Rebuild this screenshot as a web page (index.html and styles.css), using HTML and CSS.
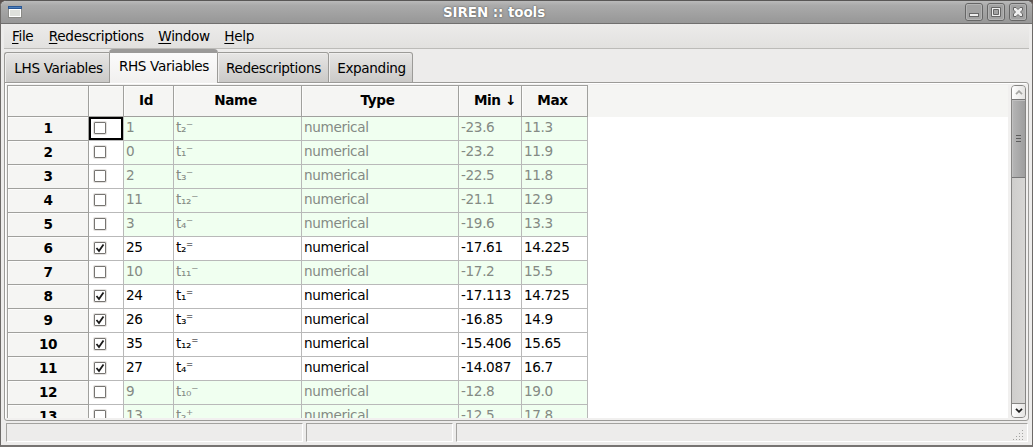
FILE: index.html
```html
<!DOCTYPE html>
<html lang="en">
<head>
<meta charset="utf-8">
<title>SIREN :: tools</title>
<link rel="stylesheet" href="styles.css">
</head>
<body>
<div class="window">
  <header class="titlebar">
    <svg class="app-icon" width="14" height="12" viewBox="0 0 14 12" shape-rendering="crispEdges"><rect width="14" height="12" fill="#8a8a86"/><rect x="1" y="3" width="12" height="8" fill="#fff"/><rect x="2" y="4" width="10" height="6" fill="#dfe1dc"/><rect width="14" height="3" fill="#2a5795"/><rect x="1" y="1" width="12" height="1" fill="#4c7fbd"/></svg>
    <h1 class="title">SIREN :: tools</h1>
    <div class="controls">
      <svg class="control" viewBox="0 0 18 18"><rect x=".5" y=".5" width="17" height="17" rx="2.5" class="frame"/><rect x="1.5" y="1.5" width="15" height="15" rx="1.5" class="shine"/><rect x="4.5" y="10.5" width="9" height="3" class="glyph"/></svg>
      <svg class="control" viewBox="0 0 18 18"><rect x=".5" y=".5" width="17" height="17" rx="2.5" class="frame"/><rect x="1.5" y="1.5" width="15" height="15" rx="1.5" class="shine"/><path d="M4.500 4.500h9v9h-9z M6.500 6.500v5h5v-5z" fill-rule="evenodd" class="glyph"/></svg>
      <svg class="control" viewBox="0 0 18 18"><rect x=".5" y=".5" width="17" height="17" rx="2.5" class="frame"/><rect x="1.5" y="1.5" width="15" height="15" rx="1.5" class="shine"/><path d="M4.500 4.500h2.500l2 2 2-2h2.500v2.500l-2 2 2 2v2.500h-2.500l-2-2-2 2h-2.500v-2.500l2-2-2-2z" class="glyph"/></svg>
    </div>
  </header>
  <nav class="menubar">
    <span class="menu"><u>F</u>ile</span><span class="menu"><u>R</u>edescriptions</span><span class="menu"><u>W</u>indow</span><span class="menu"><u>H</u>elp</span>
  </nav>
  <div class="tabs">
    <div class="tab tab-lhs">LHS Variables</div><div class="tab active">RHS Variables</div><div class="tab tab-red">Redescriptions</div><div class="tab tab-exp">Expanding</div>
  </div>
  <main class="pane">
    <div class="grid-view">
      <table class="grid">
        <colgroup><col class="c-row"><col class="c-check"><col class="c-id"><col class="c-name"><col class="c-type"><col class="c-min"><col class="c-max"></colgroup>
        <thead><tr><th></th><th></th><th><span class="h-id">Id</span></th><th><span class="h-name">Name</span></th><th><span class="h-type">Type</span></th><th><span class="h-min">Min ↓</span></th><th><span class="h-max">Max</span></th></tr></thead>
        <tbody>
          <tr class="off"><th>1</th><td class="check focus"><i class="box"></i></td><td>1</td><td>t₂⁻</td><td>numerical</td><td>-23.6</td><td>11.3</td></tr>
          <tr class="off"><th>2</th><td class="check"><i class="box"></i></td><td>0</td><td>t₁⁻</td><td>numerical</td><td>-23.2</td><td>11.9</td></tr>
          <tr class="off"><th>3</th><td class="check"><i class="box"></i></td><td>2</td><td>t₃⁻</td><td>numerical</td><td>-22.5</td><td>11.8</td></tr>
          <tr class="off"><th>4</th><td class="check"><i class="box"></i></td><td>11</td><td>t₁₂⁻</td><td>numerical</td><td>-21.1</td><td>12.9</td></tr>
          <tr class="off"><th>5</th><td class="check"><i class="box"></i></td><td>3</td><td>t₄⁻</td><td>numerical</td><td>-19.6</td><td>13.3</td></tr>
          <tr><th>6</th><td class="check"><i class="box"><svg viewBox="0 0 10 10"><path d="M1.500 5l2.500 3L8.500 1.500" /></svg></i></td><td>25</td><td>t₂⁼</td><td>numerical</td><td>-17.61</td><td>14.225</td></tr>
          <tr class="off"><th>7</th><td class="check"><i class="box"></i></td><td>10</td><td>t₁₁⁻</td><td>numerical</td><td>-17.2</td><td>15.5</td></tr>
          <tr><th>8</th><td class="check"><i class="box"><svg viewBox="0 0 10 10"><path d="M1.500 5l2.500 3L8.500 1.500" /></svg></i></td><td>24</td><td>t₁⁼</td><td>numerical</td><td>-17.113</td><td>14.725</td></tr>
          <tr><th>9</th><td class="check"><i class="box"><svg viewBox="0 0 10 10"><path d="M1.500 5l2.500 3L8.500 1.500" /></svg></i></td><td>26</td><td>t₃⁼</td><td>numerical</td><td>-16.85</td><td>14.9</td></tr>
          <tr><th>10</th><td class="check"><i class="box"><svg viewBox="0 0 10 10"><path d="M1.500 5l2.500 3L8.500 1.500" /></svg></i></td><td>35</td><td>t₁₂⁼</td><td>numerical</td><td>-15.406</td><td>15.65</td></tr>
          <tr><th>11</th><td class="check"><i class="box"><svg viewBox="0 0 10 10"><path d="M1.500 5l2.500 3L8.500 1.500" /></svg></i></td><td>27</td><td>t₄⁼</td><td>numerical</td><td>-14.087</td><td>16.7</td></tr>
          <tr class="off"><th>12</th><td class="check"><i class="box"></i></td><td>9</td><td>t₁₀⁻</td><td>numerical</td><td>-12.8</td><td>19.0</td></tr>
          <tr class="off"><th>13</th><td class="check"><i class="box"></i></td><td>13</td><td>t₂⁺</td><td>numerical</td><td>-12.5</td><td>17.8</td></tr>
        </tbody>
      </table>
    </div>
    <div class="scrollbar">
      <div class="step up"><svg width="8" height="5" viewBox="0 0 8 5"><path d="M1 4.200l3-3 3 3" stroke="#a5a5a2"/></svg></div>
      <div class="thumb"><i></i><i></i><i></i></div>
      <div class="step down"><svg width="8" height="5" viewBox="0 0 8 5"><path d="M1 .8l3 3 3-3" stroke="#1c1c1c"/></svg></div>
    </div>
  </main>
  <footer class="statusbar">
    <div class="field first"></div><div class="field second"></div>
    <div class="field last"><svg width="12" height="12" viewBox="0 0 12 12" shape-rendering="crispEdges"><path d="M10 1h1M10 4h1M7 4h1M10 7h1M7 7h1M4 7h1M10 10h1M7 10h1M4 10h1M1 10h1" transform="translate(0 .5)" stroke="#a2a2a0"/></svg></div>
  </footer>
</div>
</body>
</html>
```
FILE: styles.css
```css
* { box-sizing: border-box; }

body {
  margin: 0;
  background: #5d5350;
  font: 13.6px/16px "DejaVu Sans", sans-serif;
  letter-spacing: -0.35px;
  color: #000;
  overflow: hidden;
}

.window {
  width: 1033px;
  height: 447px;
  display: flex;
  flex-direction: column;
  background: #edeceb;
  border: 1px solid #6d6a68;
  border-top-color: #595756;
  border-bottom: 2px solid #777472;
  border-radius: 6px 6px 0 0;
  overflow: hidden;
}

.titlebar {
  height: 23px;
  flex: none;
  display: flex;
  align-items: center;
  padding: 0 5px 0 7px;
  background: linear-gradient(#bababa, #aaa 20%, #979797);
  border-bottom: 1px solid #706f6e;
}
.app-icon { flex: none; }
.title {
  flex: 1;
  margin: 0 0 0 1px;
  text-align: center;
  font-size: 13.5px;
  letter-spacing: -0.1px;
  line-height: 16px;
  color: #fff;
  text-shadow: 0 0 1px #555, 0 0 2px #666;
}
.controls { display: flex; gap: 4px; }
.control { width: 18px; height: 18px; display: block; }
.frame { fill: #a2a2a2; stroke: #666; }
.shine { fill: none; stroke: #b4b4b4; }
.glyph { fill: #eee; stroke: #666; }

.menubar {
  height: 25px;
  flex: none;
  display: flex;
  gap: 14.5px;
  margin: 0 3px;
  padding: 4px 8px 0;
  background: linear-gradient(#ecebea, #e2e1df);
  border-bottom: 1px solid #bcbbb8;
}
.menu:first-child { margin-right: 1px; }
.menu u { text-underline-offset: 2px; text-decoration-thickness: 1px; }

.tabs {
  height: 34px;
  flex: none;
  display: flex;
  align-items: flex-end;
  padding-left: 3px;
  position: relative;
  z-index: 1;
}
.tab {
  height: 31px;
  padding: 7px 0 0;
  text-align: center;
  background: linear-gradient(#e7e6e5, #cac9c7);
  border: 1px solid #9c9b98;
  border-left-width: 0;
  border-radius: 0 3px 0 0;
  box-shadow: inset 1px 1px #efeeed;
}
.tab-lhs { width: 105px; border-left-width: 1px; border-radius: 3px 0 0 0; border-right: 0; padding-left: 3px; }
.tab-red { width: 111px; padding-left: 1px; }
.tab-exp { width: 84px; padding-left: 2px; }
.tab.active {
  width: 109px;
  height: 34px;
  padding: 5px 0 0 1px;
  border: 1px solid #9c9b98;
  border-top: 4px solid #9b9a99;
  border-bottom: 0;
  border-radius: 4px 4px 0 0;
  background: linear-gradient(#fbfbfb, #f1f0ef);
  box-shadow: none;
}

.pane {
  height: 339px;
  flex: none;
  display: flex;
  margin: -1px 3px 0;
  padding: 2px;
  background: #f1f0ef;
  border: 1px solid #9c9b98;
  border-radius: 0 3px 3px 3px;
  box-shadow: inset 1px 1px #fff;
}
.grid-view {
  width: 1001px;
  height: 333px;
  overflow: hidden;
  background: linear-gradient(#f5f5f3 32px, #fff 32px);
}

.grid {
  width: 581px;
  table-layout: fixed;
  border-spacing: 0;
  border-top: 1px solid #a0a09d;
  border-left: 1px solid #a0a09d;
}
.c-row { width: 81px; }
.c-check { width: 35px; }
.c-id { width: 50px; }
.c-name { width: 128px; }
.c-type { width: 157px; }
.c-min { width: 63px; }
.c-max { width: 66px; }
.grid th, .grid td {
  height: 24px;
  padding: 0 0 1px 2px;
  border: solid #b9b9b9;
  border-width: 0 1px 1px 0;
  line-height: 16px;
  text-align: left;
  white-space: nowrap;
}
.grid td { padding-bottom: 4px; }
.grid th {
  background: #f5f5f3;
  border-color: #a0a09d;
  padding: 0 0 2px;
  text-align: center;
  box-shadow: inset 1px 1px #fcfcfb;
}
.grid thead th { height: 31px; padding-bottom: 3px; }
.grid thead span { display: inline-block; }
.h-id { margin-right: 5px; }
.h-name { margin-right: 4px; }
.h-type { margin-right: 5px; }
.h-min { margin-left: 10px; }
.h-max { margin-right: 4px; }
.off td { background: #f0fff0; color: #848a84; }
.grid td.check { background: #fff; padding: 0 0 2px 5px; }
.grid td.focus { box-shadow: inset 0 0 0 2px #000; }

.box {
  display: block;
  width: 12px;
  height: 12px;
  background: #fff;
  border: 1px solid #777572;
  border-radius: 1px;
  box-shadow: 0 0 0 1px #e4e2e0;
}
.box svg { display: block; width: 10px; height: 10px; }
.box path { fill: none; stroke: #1b1b1b; stroke-width: 1.8; }

.scrollbar {
  width: 15px;
  height: 333px;
  margin-left: 3px;
  display: flex;
  flex-direction: column;
  background: linear-gradient(90deg, #cfcecc, #d7d6d4);
  border: 1px solid #878684;
  border-radius: 4px;
  overflow: hidden;
}
.step {
  height: 13px;
  flex: none;
  display: flex;
  align-items: center;
  justify-content: center;
  background: linear-gradient(90deg, #fff, #e5e4e2);
}
.step path { fill: none; stroke-width: 1.8; }
.down { height: 14px; margin-top: auto; border-top: 1px solid #878684; }
.thumb {
  height: 79px;
  flex: none;
  display: flex;
  flex-direction: column;
  align-items: center;
  justify-content: center;
  gap: 2px;
  border: solid #777;
  border-width: 1px 0;
  background: linear-gradient(90deg, #b6b6b6, #9e9e9e);
  box-shadow: inset 1px 1px #c0c0c0;
}
.thumb i { width: 5px; height: 1px; background: #5d5d5d; }

.statusbar {
  flex: 1;
  display: flex;
  gap: 3px;
  padding: 2px 4px 3px 5px;
}
.field {
  height: 19px;
  border: 1px solid;
  border-color: #a3a29f #fff #fff #a3a29f;
}
.first { width: 297px; }
.second { width: 147px; }
.last { flex: 1; display: flex; align-items: flex-end; justify-content: flex-end; padding-right: 3px; }
.last svg { display: block; }
```
